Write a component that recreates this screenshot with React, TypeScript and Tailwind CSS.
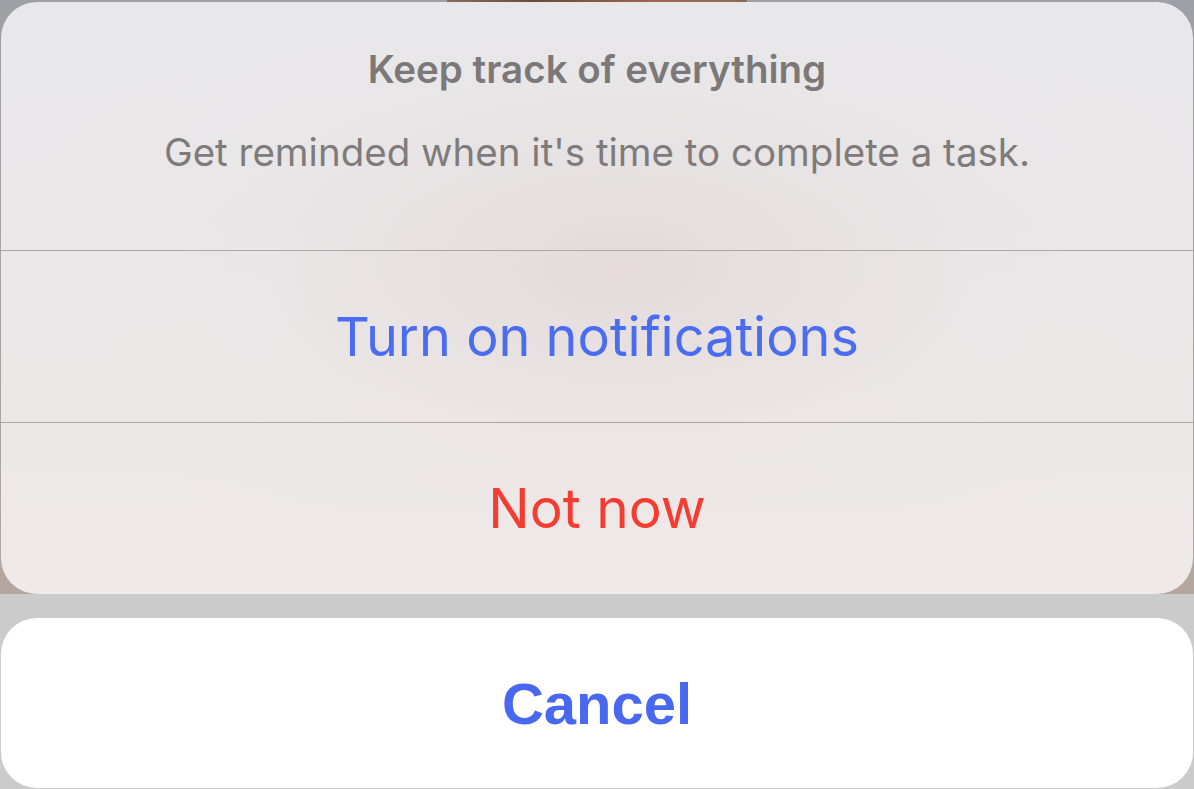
export default function App() {
  return (
    <div className="w-[1194px] h-[789px] overflow-hidden bg-[#cbcbcb] flex flex-col font-['Inter','Noto_Sans',sans-serif]">
      <div className="bg-[linear-gradient(180deg,#9da0a5_0%,#a9a3a3_60%,#b6a6a0_100%)]">
        <div className="h-[2px] flex justify-center">
          <div className="w-[300px] h-full bg-[linear-gradient(90deg,#8a6a5c,#6b4a3c_30%,#a0664e_70%,#8a6a5c)]" />
        </div>
        <div className="mx-[1px] rounded-[36px] overflow-hidden bg-[linear-gradient(180deg,#e8e8ea_0%,#ebe7e8_50%,#efe9e8_100%)]">
          <div className="bg-[radial-gradient(ellipse_at_52%_45%,rgba(220,205,203,0.45)_0%,rgba(230,220,220,0.15)_40%,rgba(0,0,0,0)_70%)]">
            <div className="h-[248px] flex flex-col items-center pt-[43px]">
              <div className="text-[38.5px] font-semibold text-[#7d7878] leading-[48px]">Keep track of everything</div>
              <div className="text-[38.5px] text-[#7f7b7b] leading-[48px] mt-[35px]">Get reminded when it's time to complete a task.</div>
            </div>
            <div className="h-px bg-[#a9a7a7]" />
            <button className="w-full h-[171px] flex items-center justify-center text-[54px] text-[#4a6cf0]">
              Turn on notifications
            </button>
            <div className="h-px bg-[#aaa6a5]" />
            <button className="w-full h-[171px] flex items-center justify-center text-[55px] text-[#f63b30]">
              Not now
            </button>
          </div>
        </div>
      </div>
      <div className="h-[24px]" />
      <div className="mx-[1px] h-[170px] rounded-[36px] bg-white flex items-center justify-center">
        <span className="text-[58px] font-bold text-[#4868ef] font-['Liberation_Sans',Arial,sans-serif]">Cancel</span>
      </div>
    </div>
  );
}
